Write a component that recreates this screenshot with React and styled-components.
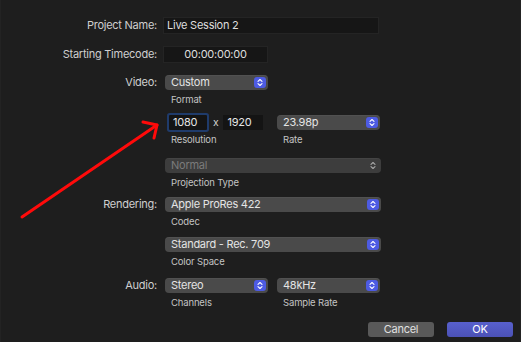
import React from "react";
import styled, { createGlobalStyle } from "styled-components";

const Global = createGlobalStyle`
  html, body { margin: 0; padding: 0; background: #1e1e1e; }
  body { font-family: Inter, "Liberation Sans", Arial, sans-serif; -webkit-font-smoothing: antialiased; letter-spacing: -0.25px; }
`;

const Dialog = styled.div`
  position: relative;
  width: 521px;
  height: 342px;
  box-sizing: border-box;
  background: #1e1e1e;
  border-left: 1px solid #232323;
  border-right: 1px solid #232323;
  padding-top: 17px;
  display: flex;
  flex-direction: column;
  overflow: hidden;
`;

const Row = styled.div`
  display: grid;
  grid-template-columns: 156px 216px;
  column-gap: ${(p) => (p.$tight ? 6 : 7)}px;
  align-items: start;
  margin-top: ${(p) => p.$gap || 0}px;
`;

const Label = styled.div`
  text-align: right;
  color: #cfcfcf;
  font-size: 11px;
  line-height: ${(p) => p.$h || 15}px;
  white-space: nowrap;
`;

const Controls = styled.div`
  display: flex;
  flex-direction: column;
`;

const Pair = styled.div`
  display: flex;
  gap: 9px;
`;

const Group = styled.div`
  display: flex;
  flex-direction: column;
  width: ${(p) => (p.$w ? p.$w + "px" : "auto")};
  flex: ${(p) => (p.$w ? "none" : 1)};
`;

const Caption = styled.div`
  margin-top: 4px;
  padding-left: 7px;
  font-size: 9.5px;
  line-height: 12px;
  color: #c4c4c4;
  white-space: nowrap;
  letter-spacing: -0.15px;
`;

const TextField = styled.div`
  box-sizing: border-box;
  height: 17px;
  width: ${(p) => p.$w}px;
  background: #161616;
  border: 1px solid #242424;
  color: #dedede;
  font-size: 11px;
  line-height: 15px;
  padding-left: 3px;
  text-align: ${(p) => (p.$center ? "center" : "left")};
  padding-right: ${(p) => (p.$center ? 3 : 0)}px;
`;

const Popup = styled.div`
  box-sizing: border-box;
  height: 15px;
  width: ${(p) => (p.$w ? p.$w + "px" : "100%")};
  margin-left: 1px;
  border-radius: 4px;
  background: ${(p) => (p.$disabled ? "#3d3d3d" : "#4a4a4a")};
  color: ${(p) => (p.$disabled ? "#7b7b7b" : "#e4e4e4")};
  font-size: 11px;
  line-height: 15px;
  padding-left: 6px;
  padding-right: 1px;
  display: flex;
  align-items: center;
  justify-content: space-between;
  box-shadow: inset 0 0.5px 0 rgba(255,255,255,0.08);
`;

const Stepper = styled.span`
  width: 12px;
  height: 11px;
  border-radius: 3px;
  background: ${(p) => (p.$disabled ? "transparent" : "#4d5be3")};
  display: flex;
  align-items: center;
  justify-content: center;
  margin-right: 1px;
`;

const ResRow = styled.div`
  display: flex;
  align-items: center;
  height: 15px;
`;

const NumField = styled.div`
  box-sizing: border-box;
  width: ${(p) => p.$w}px;
  height: 15px;
  margin-left: ${(p) => p.$ml || 0}px;
  background: #141414;
  color: #e6e6e6;
  font-size: 11px;
  line-height: 15px;
  padding-left: 4px;
  box-shadow: ${(p) => (p.$focus ? "0 0 0 2px #1f3b6b" : "none")};
  border-radius: ${(p) => (p.$focus ? 1 : 0)}px;
`;

const Times = styled.span`
  color: #d0d0d0;
  font-size: 10.5px;
  margin: 0 5px 0 6px;
`;

const Buttons = styled.div`
  display: flex;
  justify-content: flex-end;
  gap: 13px;
  padding-right: 7px;
  margin-top: 13px;
`;

const Button = styled.div`
  box-sizing: border-box;
  width: 66px;
  height: 15px;
  border-radius: 3px;
  background: ${(p) => (p.$primary ? "linear-gradient(#5860cc, #4b51b6)" : "#595959")};
  color: ${(p) => (p.$primary ? "#ffffff" : "#e0e0e0")};
  font-size: 11px;
  line-height: 15px;
  text-align: center;
`;

const Arrow = styled.svg`
  position: absolute;
  left: 0;
  top: 0;
  pointer-events: none;
`;

function Chevrons({ disabled }) {
  return (
    <Stepper $disabled={disabled}>
      <svg width="8" height="9" viewBox="0 0 8 9" fill="none"
        stroke={disabled ? "#a8a8a8" : "#ffffff"} strokeWidth="1.1"
        strokeLinecap="round" strokeLinejoin="round">
        <path d="M2 3.3 L4 1.5 L6 3.3" />
        <path d="M2 5.7 L4 7.5 L6 5.7" />
      </svg>
    </Stepper>
  );
}

function Select({ value, disabled, w }) {
  return (
    <Popup $disabled={disabled} $w={w}>
      <span>{value}</span>
      <Chevrons disabled={disabled} />
    </Popup>
  );
}

export default function App() {
  return (
    <>
      <Global />
      <Dialog>
        <Row $tight>
          <Label $h={17}>Project Name:</Label>
          <TextField $w={216}>Live Session 2</TextField>
        </Row>
        <Row $tight $gap={12}>
          <Label $h={17}>Starting Timecode:</Label>
          <TextField $w={105} $center>00:00:00:00</TextField>
        </Row>
        <Row $gap={12}>
          <Label>Video:</Label>
          <Controls>
            <Group $w={103}>
              <Select value="Custom" />
              <Caption>Format</Caption>
            </Group>
          </Controls>
        </Row>
        <Row $gap={9}>
          <Label />
          <Pair>
            <Group $w={103}>
              <ResRow>
                <NumField $w={38} $ml={5} $focus>1080</NumField>
                <Times>x</Times>
                <NumField $w={40}>1920</NumField>
              </ResRow>
              <Caption>Resolution</Caption>
            </Group>
            <Group $w={103}>
              <Select value="23.98p" />
              <Caption>Rate</Caption>
            </Group>
          </Pair>
        </Row>
        <Row $gap={12}>
          <Label />
          <Group>
            <Select value="Normal" disabled />
            <Caption>Projection Type</Caption>
          </Group>
        </Row>
        <Row $gap={8}>
          <Label>Rendering:</Label>
          <Group>
            <Select value="Apple ProRes 422" />
            <Caption>Codec</Caption>
          </Group>
        </Row>
        <Row $gap={9}>
          <Label />
          <Group>
            <Select value="Standard - Rec. 709" />
            <Caption>Color Space</Caption>
          </Group>
        </Row>
        <Row $gap={10}>
          <Label>Audio:</Label>
          <Pair>
            <Group $w={103}>
              <Select value="Stereo" />
              <Caption>Channels</Caption>
            </Group>
            <Group $w={103}>
              <Select value="48kHz" />
              <Caption>Sample Rate</Caption>
            </Group>
          </Pair>
        </Row>
        <Buttons>
          <Button>Cancel</Button>
          <Button $primary>OK</Button>
        </Buttons>
        <Arrow width="521" height="342" viewBox="0 0 521 342">
          <g stroke="#ff0a0a" strokeWidth="3" strokeLinecap="round" strokeLinejoin="round" fill="none">
            <path d="M21 217 L156 125" />
            <path d="M142 122 L156 125 L153 138" />
          </g>
        </Arrow>
      </Dialog>
    </>
  );
}
